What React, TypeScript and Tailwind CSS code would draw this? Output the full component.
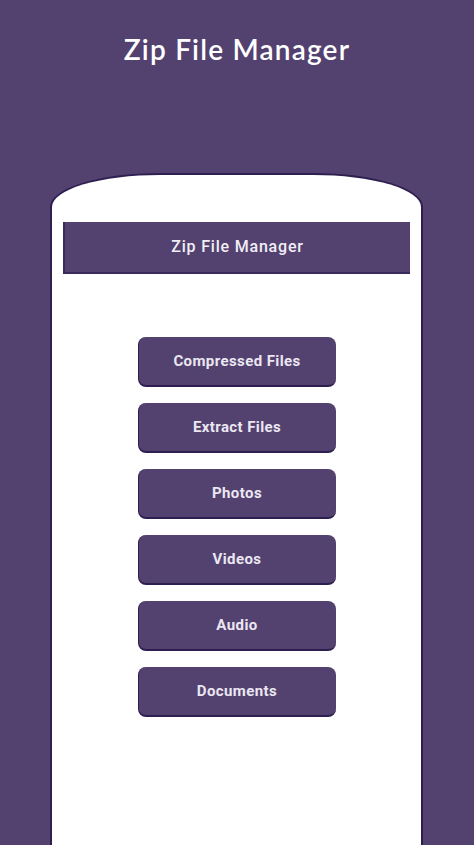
const menuItems = ["Compressed Files", "Extract Files", "Photos", "Videos", "Audio", "Documents"];

export default function App() {
  return (
    <div className="h-[845px] w-[474px] overflow-hidden bg-[#534170] font-['Lato','Noto_Sans',sans-serif]">
      <h1 className="pt-[31px] text-center text-[28px] font-semibold leading-[36px] tracking-[1.2px] text-white">
        Zip File Manager
      </h1>

      <div className="ml-[50px] mt-[106px] h-[720px] w-[373px] rounded-t-[110px_34px] border-x-2 border-t-2 border-[#2d1f50] bg-white px-[11px] pt-[47px]">
        <div className="flex h-[52px] items-center justify-center border-b-2 border-l-2 border-[#3a2a5c] bg-[#534170] font-['Roboto',sans-serif] text-[16px] font-medium tracking-[0.8px] text-[#f1eef5]">
          Zip File Manager
        </div>

        <div className="mt-[63px] flex flex-col items-center gap-[16px]">
          {menuItems.map((label) => (
            <button
              key={label}
              className="flex h-[50px] w-[198px] items-center justify-center rounded-[8px] border-b-2 border-l border-[#2d1f50] bg-[#534170] font-['Roboto',sans-serif] text-[15px] font-bold tracking-[0.4px] text-[#ebe7f0]"
            >
              {label}
            </button>
          ))}
        </div>
      </div>
    </div>
  );
}
